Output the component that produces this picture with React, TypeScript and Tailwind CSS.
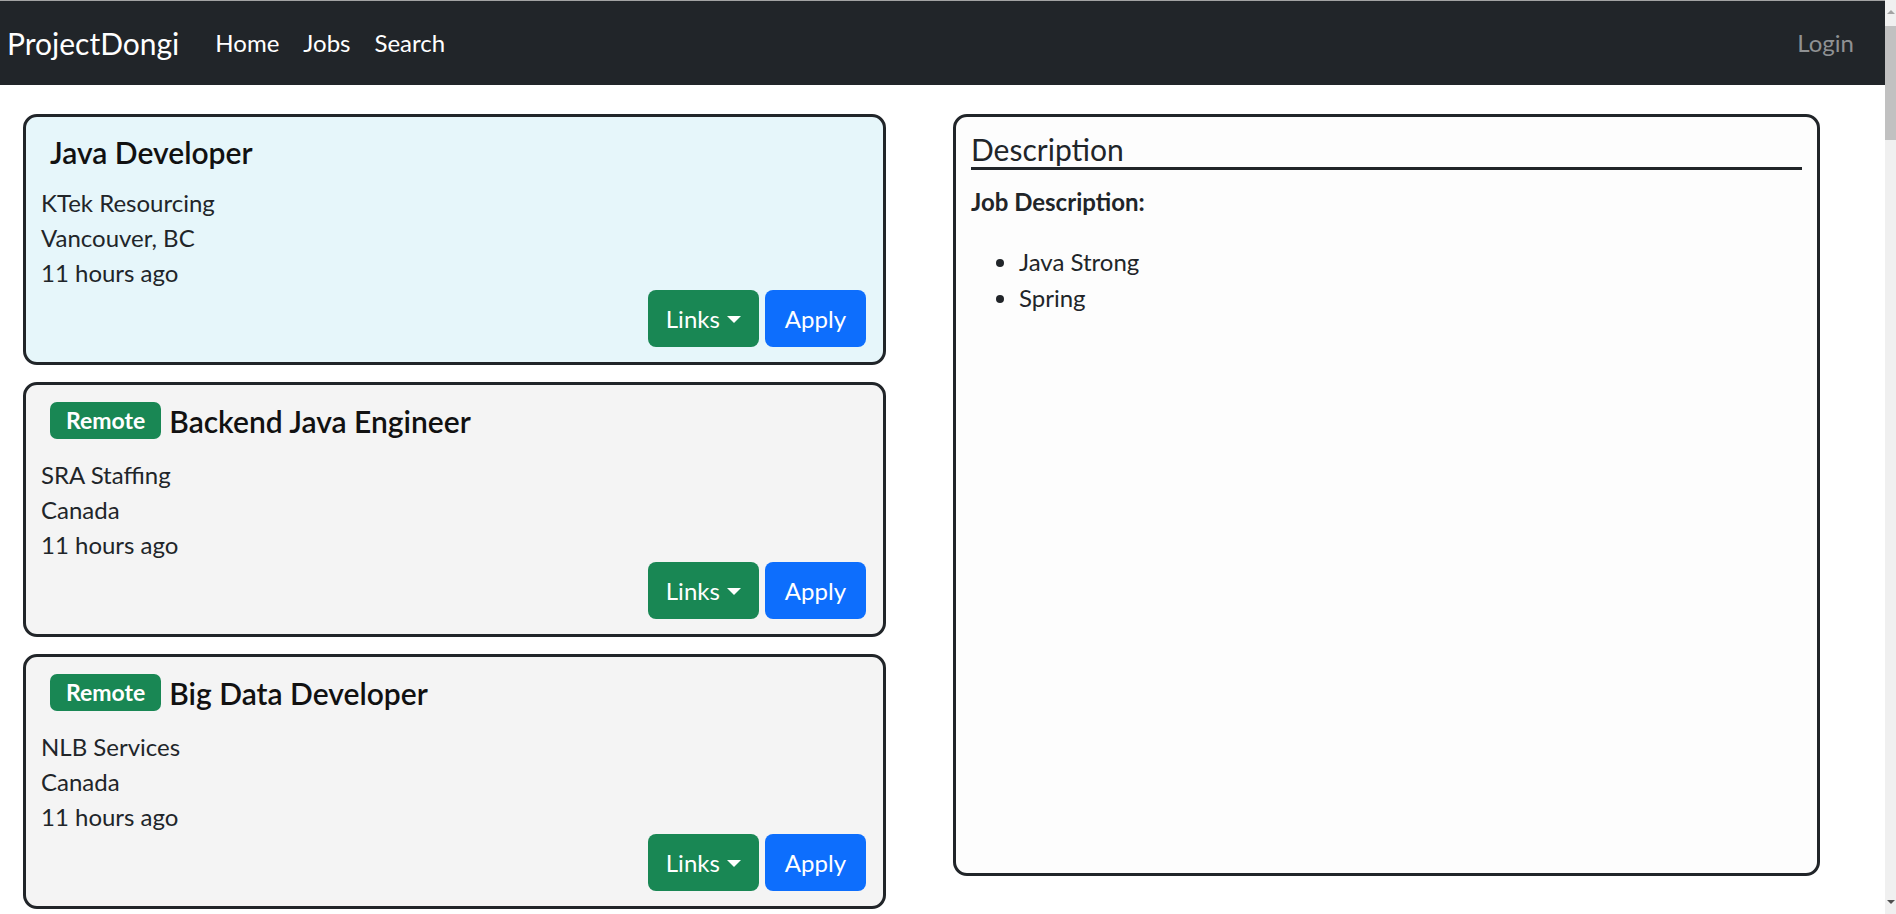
import React from "react";

type Job = {
  title: string;
  company: string;
  location: string;
  posted: string;
  remote?: boolean;
  active?: boolean;
};

const jobs: Job[] = [
  { title: "Java Developer", company: "KTek Resourcing", location: "Vancouver, BC", posted: "11 hours ago", active: true },
  { title: "Backend Java Engineer", company: "SRA Staffing", location: "Canada", posted: "11 hours ago", remote: true },
  { title: "Big Data Developer", company: "NLB Services", location: "Canada", posted: "11 hours ago", remote: true },
];

function JobCard({ job }: { job: Job }) {
  return (
    <div
      className={
        "rounded-[14px] border-[3px] border-[#212529] pl-[15px] pr-[17px] pt-[17px] pb-[15px] " +
        (job.active ? "bg-[#e6f6fa]" : "bg-[#f4f4f4]")
      }
    >
      <div className={"flex items-center gap-[8px] pl-[9px] " + (job.remote ? "mb-[18px]" : "mb-[15px]")}>
        {job.remote && (
          <span className="flex h-[37px] items-center rounded-[7px] bg-[#198754] px-[16px] text-[23px] font-bold text-white">
            Remote
          </span>
        )}
        <h5 className="text-[30px] leading-[36px] font-semibold text-[#111]">{job.title}</h5>
      </div>
      <div className="text-[24px] leading-[35px] text-[#212529]">
        <div>{job.company}</div>
        <div>{job.location}</div>
        <div>{job.posted}</div>
      </div>
      <div className="flex justify-end gap-[6px]">
        <button className="flex h-[57px] items-center rounded-[8px] bg-[#198754] px-[18px] text-[24px] text-white">
          Links
          <span className="ml-[7px] mt-[2px] h-0 w-0 border-x-[7px] border-t-[7px] border-x-transparent border-t-white" />
        </button>
        <button className="flex h-[57px] items-center rounded-[8px] bg-[#0d6efd] px-[20px] text-[24px] text-white">
          Apply
        </button>
      </div>
    </div>
  );
}

export default function App() {
  return (
    <div className="flex h-[914px] w-full overflow-hidden bg-white font-['Lato',sans-serif]">
      <div className="min-w-0 flex-1">
        <nav className="flex h-[85px] items-center border-t border-[#a3a3a3] bg-[#212529] pl-[7px] pr-[19px]">
          <a className="mr-[24px] text-[30px] leading-[45px] text-white">ProjectDongi</a>
          <div className="flex text-[24px] leading-[36px] text-white">
            <a className="px-[12px]">Home</a>
            <a className="px-[12px]">Jobs</a>
            <a className="px-[12px]">Search</a>
          </div>
          <a className="ml-auto px-[12px] text-[24px] leading-[36px] text-[#8f9193]">Login</a>
        </nav>

        <main className="flex gap-[67px] pl-[23px] pt-[29px]">
          <div className="flex w-[863px] flex-col gap-[17px]">
            {jobs.map((j) => (
              <JobCard key={j.title} job={j} />
            ))}
          </div>

          <div className="h-[762px] w-[867px] rounded-[14px] border-[3px] border-[#212529] bg-[#fdfdfd] px-[15px] pt-[14px]">
            <h4 className="border-b-[3px] border-[#212529] text-[30px] leading-[36px] text-[#212529]">Description</h4>
            <p className="mt-[14px] mb-[24px] text-[24px] font-bold leading-[36px] text-[#212529]">Job Description:</p>
            <ul className="list-disc pl-[48px] text-[24px] leading-[36px] text-[#212529]">
              <li>Java Strong</li>
              <li>Spring</li>
            </ul>
          </div>
        </main>
      </div>

      {/* scrollbar */}
      <div className="flex w-[11px] flex-col items-center bg-[#f0f0f0]">
        <div className="mt-[10px] h-0 w-0 border-x-[4px] border-b-[4px] border-x-transparent border-b-[#a3a3a3]" />
        <div className="mt-[12px] h-[114px] w-full bg-[#c1c1c1]" />
        <div className="mt-auto mb-[10px] h-0 w-0 border-x-[4px] border-t-[4px] border-x-transparent border-t-[#505050]" />
      </div>
    </div>
  );
}
